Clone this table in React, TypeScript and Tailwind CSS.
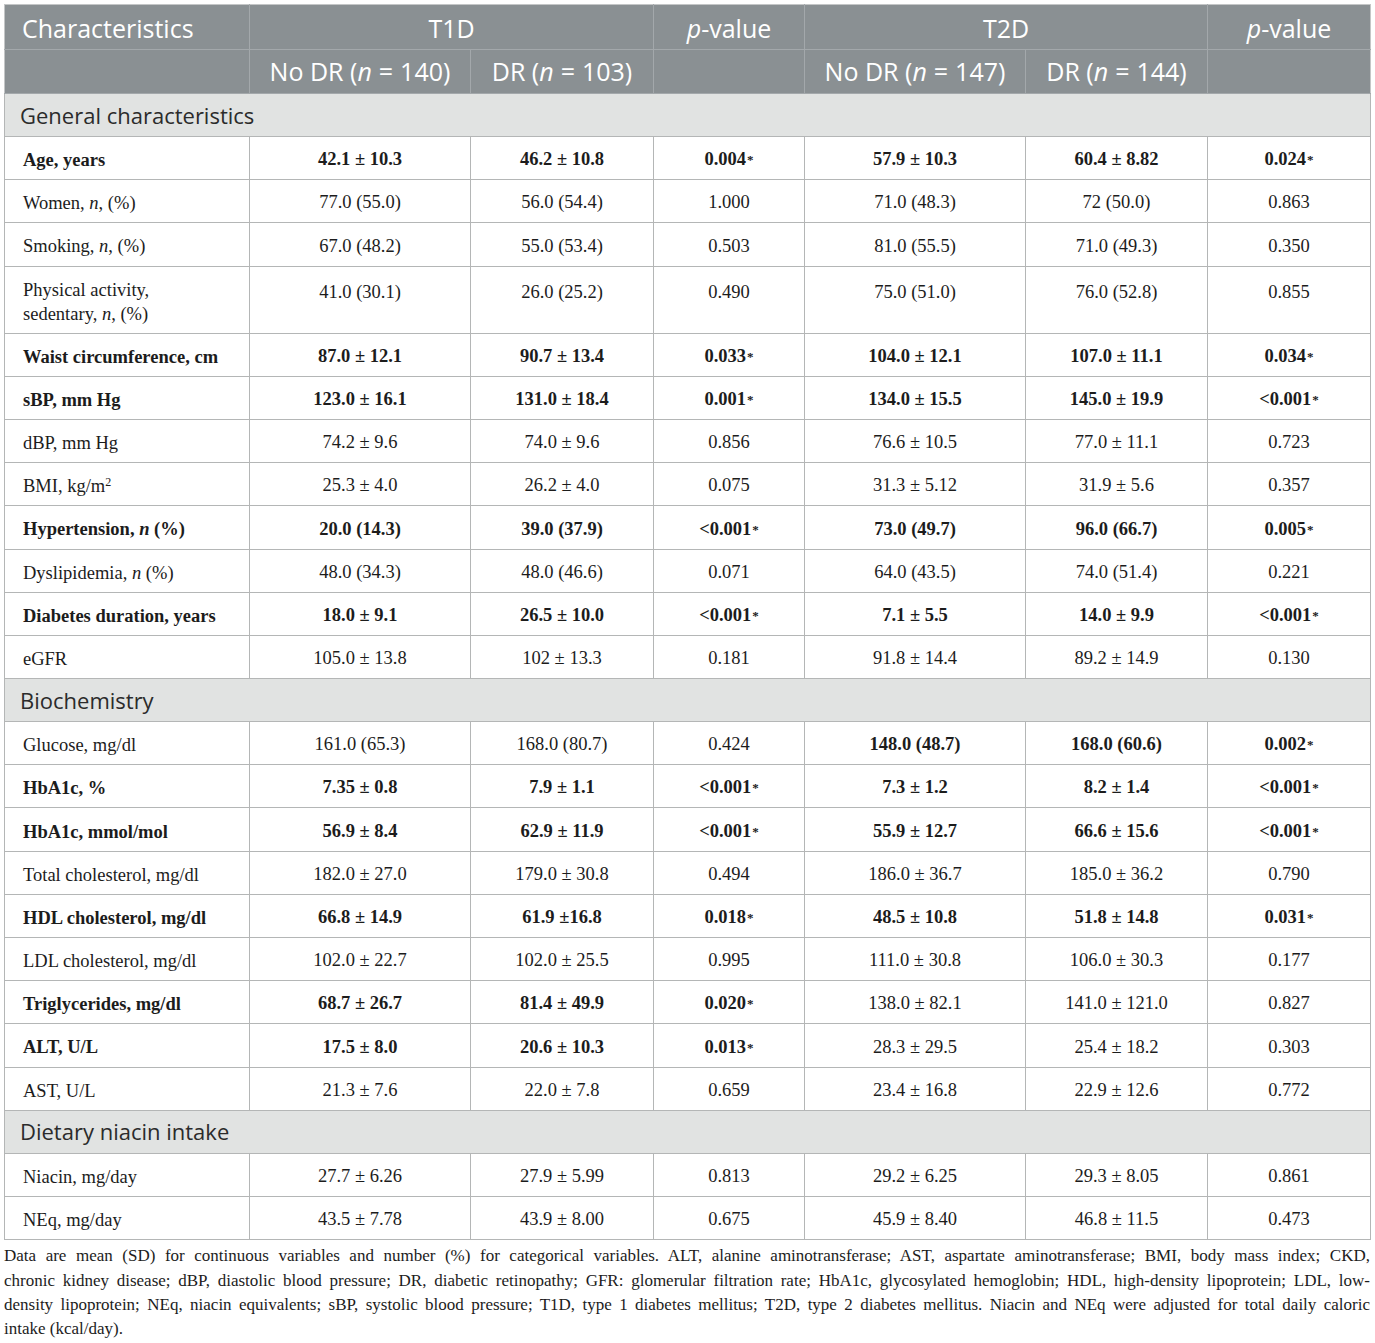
import React from "react";

const sans = { fontFamily: '"Open Sans", "Noto Sans", sans-serif' };
const serif = { fontFamily: '"Liberation Serif", serif' };

type Row = {
  label: React.ReactNode;
  v: string[];
  b: boolean[];
  tall?: boolean;
};

const Star = () => <sup className="text-[13px] relative top-[-1px] ml-[1px]">*</sup>;

const fmt = (s: string) => {
  if (s.endsWith("*")) {
    return (
      <>
        {s.slice(0, -1)}
        <Star />
      </>
    );
  }
  return s;
};

const allB = [true, true, true, true, true, true, true];
const noB = [false, false, false, false, false, false, false];

const general: Row[] = [
  { label: "Age, years", v: ["42.1 ± 10.3", "46.2 ± 10.8", "0.004*", "57.9 ± 10.3", "60.4 ± 8.82", "0.024*"], b: allB },
  { label: <>Women, <i>n</i>, (%)</>, v: ["77.0 (55.0)", "56.0 (54.4)", "1.000", "71.0 (48.3)", "72 (50.0)", "0.863"], b: noB },
  { label: <>Smoking, <i>n</i>, (%)</>, v: ["67.0 (48.2)", "55.0 (53.4)", "0.503", "81.0 (55.5)", "71.0 (49.3)", "0.350"], b: noB },
  {
    label: (
      <>
        Physical activity,
        <br />
        sedentary, <i>n</i>, (%)
      </>
    ),
    v: ["41.0 (30.1)", "26.0 (25.2)", "0.490", "75.0 (51.0)", "76.0 (52.8)", "0.855"],
    b: noB,
    tall: true,
  },
  { label: "Waist circumference, cm", v: ["87.0 ± 12.1", "90.7 ± 13.4", "0.033*", "104.0 ± 12.1", "107.0 ± 11.1", "0.034*"], b: allB },
  { label: "sBP, mm Hg", v: ["123.0 ± 16.1", "131.0 ± 18.4", "0.001*", "134.0 ± 15.5", "145.0 ± 19.9", "<0.001*"], b: allB },
  { label: "dBP, mm Hg", v: ["74.2 ± 9.6", "74.0 ± 9.6", "0.856", "76.6 ± 10.5", "77.0 ± 11.1", "0.723"], b: noB },
  {
    label: (
      <>
        BMI, kg/m<sup className="text-[12px]">2</sup>
      </>
    ),
    v: ["25.3 ± 4.0", "26.2 ± 4.0", "0.075", "31.3 ± 5.12", "31.9 ± 5.6", "0.357"],
    b: noB,
  },
  { label: <>Hypertension, <i>n</i> (%)</>, v: ["20.0 (14.3)", "39.0 (37.9)", "<0.001*", "73.0 (49.7)", "96.0 (66.7)", "0.005*"], b: allB },
  { label: <>Dyslipidemia, <i>n</i> (%)</>, v: ["48.0 (34.3)", "48.0 (46.6)", "0.071", "64.0 (43.5)", "74.0 (51.4)", "0.221"], b: noB },
  { label: "Diabetes duration, years", v: ["18.0 ± 9.1", "26.5 ± 10.0", "<0.001*", "7.1 ± 5.5", "14.0 ± 9.9", "<0.001*"], b: allB },
  { label: "eGFR", v: ["105.0 ± 13.8", "102 ± 13.3", "0.181", "91.8 ± 14.4", "89.2 ± 14.9", "0.130"], b: noB },
];

const t1Bold = [true, true, true, true, false, false, false];
const t2Bold = [false, false, false, false, true, true, true];

const bio: Row[] = [
  { label: "Glucose, mg/dl", v: ["161.0 (65.3)", "168.0 (80.7)", "0.424", "148.0 (48.7)", "168.0 (60.6)", "0.002*"], b: t2Bold },
  { label: "HbA1c, %", v: ["7.35 ± 0.8", "7.9 ± 1.1", "<0.001*", "7.3 ± 1.2", "8.2 ± 1.4", "<0.001*"], b: allB },
  { label: "HbA1c, mmol/mol", v: ["56.9 ± 8.4", "62.9 ± 11.9", "<0.001*", "55.9 ± 12.7", "66.6 ± 15.6", "<0.001*"], b: allB },
  { label: "Total cholesterol, mg/dl", v: ["182.0 ± 27.0", "179.0 ± 30.8", "0.494", "186.0 ± 36.7", "185.0 ± 36.2", "0.790"], b: noB },
  { label: "HDL cholesterol, mg/dl", v: ["66.8 ± 14.9", "61.9 ±16.8", "0.018*", "48.5 ± 10.8", "51.8 ± 14.8", "0.031*"], b: allB },
  { label: "LDL cholesterol, mg/dl", v: ["102.0 ± 22.7", "102.0 ± 25.5", "0.995", "111.0 ± 30.8", "106.0 ± 30.3", "0.177"], b: noB },
  { label: "Triglycerides, mg/dl", v: ["68.7 ± 26.7", "81.4 ± 49.9", "0.020*", "138.0 ± 82.1", "141.0 ± 121.0", "0.827"], b: t1Bold },
  { label: "ALT, U/L", v: ["17.5 ± 8.0", "20.6 ± 10.3", "0.013*", "28.3 ± 29.5", "25.4 ± 18.2", "0.303"], b: t1Bold },
  { label: "AST, U/L", v: ["21.3 ± 7.6", "22.0 ± 7.8", "0.659", "23.4 ± 16.8", "22.9 ± 12.6", "0.772"], b: noB },
];

const diet: Row[] = [
  { label: "Niacin, mg/day", v: ["27.7 ± 6.26", "27.9 ± 5.99", "0.813", "29.2 ± 6.25", "29.3 ± 8.05", "0.861"], b: noB },
  { label: "NEq, mg/day", v: ["43.5 ± 7.78", "43.9 ± 8.00", "0.675", "45.9 ± 8.40", "46.8 ± 11.5", "0.473"], b: noB },
];

const cellBorder = "border border-[#b4b6b6]";
const hdrBorder = "border border-[#a3a8ab]";

function DataRow({ r }: { r: Row }) {
  return (
    <tr className={r.tall ? "h-[67px]" : "h-[43.2px]"}>
      <td
        className={`${cellBorder} pl-[18px] pr-2 pt-[4px] text-left align-middle leading-[24px] ${r.b[0] ? "font-bold" : ""}`}
      >
        {r.label}
      </td>
      {r.v.map((x, i) => (
        <td
          key={i}
          className={`${cellBorder} text-center ${r.tall ? "align-top pt-[12px]" : "align-middle pt-[4px]"} ${r.b[i + 1] ? "font-bold" : ""}`}
        >
          {fmt(x)}
        </td>
      ))}
    </tr>
  );
}

function Section({ title }: { title: string }) {
  return (
    <tr className="h-[43px] bg-[#e1e3e2]">
      <td colSpan={7} className={`${cellBorder} pl-[15px] text-left align-middle text-[22px] text-[#2b2b2b]`} style={sans}>
        {title}
      </td>
    </tr>
  );
}

const Eq = () => <span className="mx-[7px]">=</span>;

const footLines = [
  "Data are mean (SD) for continuous variables and number (%) for categorical variables. ALT, alanine aminotransferase; AST, aspartate aminotransferase; BMI, body mass index; CKD,",
  "chronic kidney disease; dBP, diastolic blood pressure; DR, diabetic retinopathy; GFR: glomerular filtration rate; HbA1c, glycosylated hemoglobin; HDL, high-density lipoprotein; LDL, low-",
  "density lipoprotein; NEq, niacin equivalents; sBP, systolic blood pressure; T1D, type 1 diabetes mellitus; T2D, type 2 diabetes mellitus. Niacin and NEq were adjusted for total daily caloric",
];

export default function App() {
  return (
    <div className="bg-white w-[1375px] min-h-[1343px] pt-[4px] pl-[4px]">
      <div className="w-[1366px]">
        <table className="border-collapse table-fixed w-[1366px] text-[18.5px] text-[#1c1c1c]" style={serif}>
          <colgroup>
            <col className="w-[245px]" />
            <col className="w-[221px]" />
            <col className="w-[183px]" />
            <col className="w-[151px]" />
            <col className="w-[221px]" />
            <col className="w-[182px]" />
            <col className="w-[163px]" />
          </colgroup>
          <thead style={sans} className="text-white text-[25px] font-normal">
            <tr className="h-[45px] bg-[#8a9093]">
              <th className={`${hdrBorder} border-t-[#c4c6c7] border-l-[#c4c6c7] pl-[17px] pt-[3px] text-left font-normal align-middle`}>
                Characteristics
              </th>
              <th colSpan={2} className={`${hdrBorder} border-t-[#c4c6c7] pt-[3px] text-center font-normal`}>
                T1D
              </th>
              <th className={`${hdrBorder} border-t-[#c4c6c7] pt-[3px] text-center font-normal`}>
                <i>p</i>-value
              </th>
              <th colSpan={2} className={`${hdrBorder} border-t-[#c4c6c7] pt-[3px] text-center font-normal`}>
                T2D
              </th>
              <th className={`${hdrBorder} border-t-[#c4c6c7] border-r-[#c4c6c7] pt-[3px] text-center font-normal`}>
                <i>p</i>-value
              </th>
            </tr>
            <tr className="h-[44px] bg-[#8a9093]">
              <th className={`${hdrBorder} border-l-[#c4c6c7] font-normal`}></th>
              <th className={`${hdrBorder} text-center font-normal`}>
                No DR (<i>n</i>
                <Eq />
                140)
              </th>
              <th className={`${hdrBorder} text-center font-normal`}>
                DR (<i>n</i>
                <Eq />
                103)
              </th>
              <th className={`${hdrBorder} font-normal`}></th>
              <th className={`${hdrBorder} text-center font-normal`}>
                No DR (<i>n</i>
                <Eq />
                147)
              </th>
              <th className={`${hdrBorder} text-center font-normal`}>
                DR (<i>n</i>
                <Eq />
                144)
              </th>
              <th className={`${hdrBorder} border-r-[#c4c6c7] font-normal`}></th>
            </tr>
          </thead>
          <tbody>
            <Section title="General characteristics" />
            {general.map((r, i) => (
              <DataRow key={i} r={r} />
            ))}
            <Section title="Biochemistry" />
            {bio.map((r, i) => (
              <DataRow key={i} r={r} />
            ))}
            <Section title="Dietary niacin intake" />
            {diet.map((r, i) => (
              <DataRow key={i} r={r} />
            ))}
          </tbody>
        </table>
        <div className="mt-[4px] text-[17px] leading-[24.4px] text-[#1c1c1c]" style={serif}>
          {footLines.map((l, i) => (
            <div key={i} className="text-justify [text-align-last:justify] whitespace-nowrap">
              {l}
            </div>
          ))}
          <div>intake (kcal/day).</div>
        </div>
      </div>
    </div>
  );
}
